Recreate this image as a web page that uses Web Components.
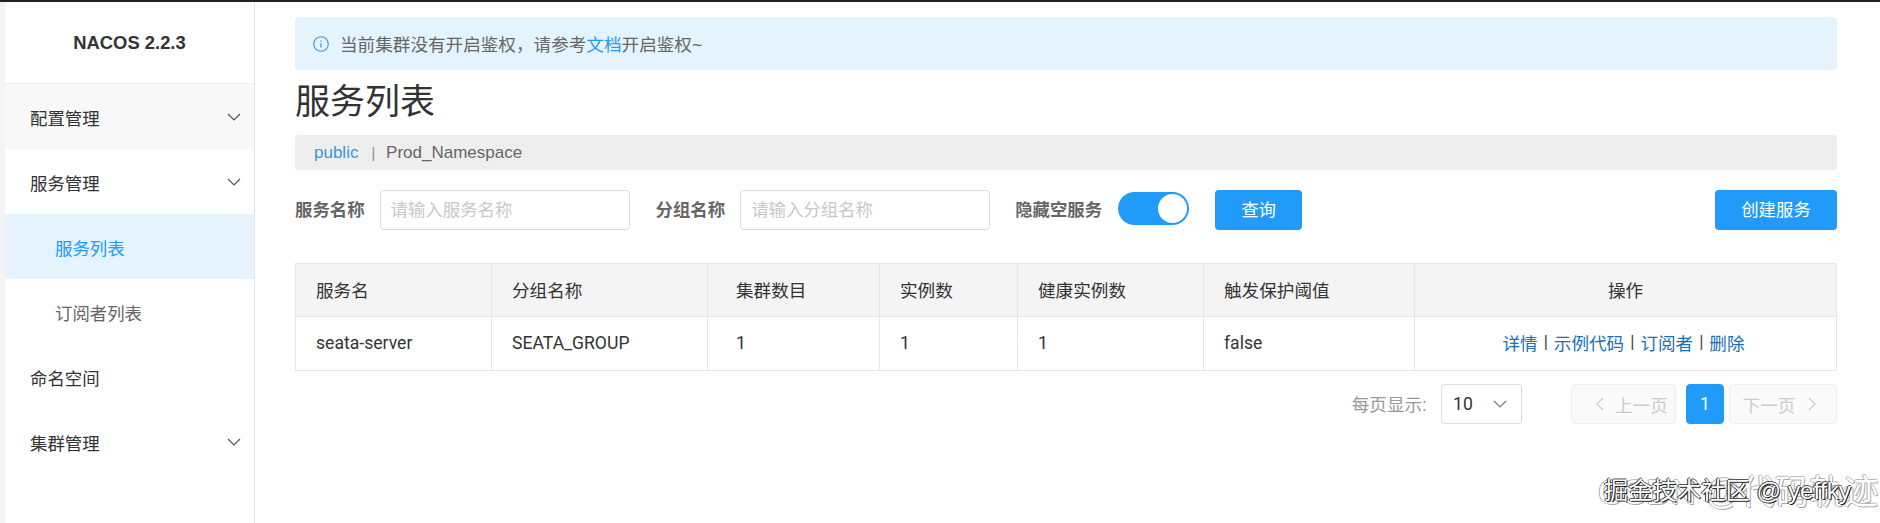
<!DOCTYPE html>
<html>
<head>
<meta charset="utf-8">
<title>Nacos</title>
<style>
  html, body { margin: 0; height: 100%; background: #fff; }
  body {
    font-family: "Liberation Sans", "Noto Sans CJK SC", sans-serif;
    color: #333;
    height: 523px;
    overflow: hidden;
  }
</style>
</head>
<body>
<nacos-app></nacos-app>

<script>
// small helper, every element below is just a template + shadow root
function defineEl(name, html, extra) {
  const tpl = document.createElement('template')
  tpl.innerHTML = html
  class El extends HTMLElement {
    constructor() {
      super()
      this.attachShadow({ mode: 'open' })
      this.shadowRoot.appendChild(tpl.content.cloneNode(true))
      if (extra) extra(this)
    }
  }
  customElements.define(name, El)
}

const chevron = `<svg width="14" height="8" viewBox="0 0 14 8" fill="none" stroke="currentColor" stroke-width="1.2"><path d="M1 1l6 6 6-6"/></svg>`

defineEl('nav-item', `
  <style>
    :host { display: flex; align-items: center; justify-content: space-between; height: 65px; padding: 0 13px 0 25px; font-size: 17.4px; color: #333; }
    :host([hover]) { background: #f8f8f8; }
    :host([sub]) { padding-left: 50px; color: #666; }
    :host([active]) { background: #e4f3fe; color: #209bfa; }
    span { position: relative; top: 1px; }
    .c { display: none; color: #555; line-height: 0; top: 0; }
    :host([arrow]) .c { display: block; }
  </style>
  <span><slot></slot></span>
  <span class="c">${chevron}</span>
`)

defineEl('app-sidebar', `
  <style>
    :host { display: block; width: 249px; flex: none; margin-left: 5px; border-right: 1px solid #e6e6e6; background: #fff; box-shadow: -5px 0 0 #f4f4f4; }
    .logo { height: 81px; display: flex; align-items: center; justify-content: center; font-size: 18.4px; font-weight: 700; color: #333; border-bottom: 1px solid #eee; }
  </style>
  <div class="logo">NACOS 2.2.3</div>
  <slot></slot>
`)

defineEl('alert-banner', `
  <style>
    :host { display: flex; align-items: center; height: 53px; padding: 0 0 0 18px; background: #e4f3fe; border-radius: 4px; color: #666; font-size: 17.6px; box-sizing: border-box; }
    svg { margin-right: 11px; flex: none; }
    ::slotted(a) { color: #209bfa; text-decoration: none; }
  </style>
  <svg width="16" height="16" viewBox="0 0 16 16" fill="none" stroke="#3f92ea" stroke-width="1.1">
    <circle cx="8" cy="8" r="7.3"/>
    <path d="M8 7.2v4.2" stroke-width="1.3"/>
    <path d="M8 4.4v1.3" stroke-width="1.3"/>
  </svg>
  <span><slot></slot></span>
`)

defineEl('page-title', `
  <style>
    :host { display: flex; align-items: center; height: 65px; font-size: 35px; color: #333; line-height: 1; padding-bottom: 2px; box-sizing: border-box; }
  </style>
  <slot></slot>
`)

defineEl('namespace-bar', `
  <style>
    :host { display: flex; align-items: center; height: 35px; padding-left: 19px; background: #eee; border-radius: 3px; font-size: 17px; color: #666; }
    .pub { color: #3b98dd; }
    .sep { margin: 0 11px 0 13px; color: #888; font-size: 14px; }
  </style>
  <span class="pub">public</span><span class="sep">|</span><span>Prod_Namespace</span>
`)

defineEl('text-field', `
  <style>
    :host { display: flex; align-items: center; }
    label { font-size: 17.4px; font-weight: 700; color: #666; margin-right: 15px; white-space: nowrap; padding-bottom: 3px; }
    .box { height: 40px; box-sizing: border-box; border: 1px solid #dcdcdc; border-radius: 4px; padding: 0 0 3px 10px; display: flex; align-items: center; font-size: 17.4px; color: #c8c8c8; }
  </style>
  <label><slot name="label"></slot></label>
  <div class="box"><slot></slot></div>
`, el => {
  el.shadowRoot.querySelector('.box').style.width = el.getAttribute('box-width') + 'px'
})

defineEl('toggle-switch', `
  <style>
    :host { display: flex; align-items: center; margin-left: -1px; }
    label { font-size: 17.4px; font-weight: 700; color: #666; margin-right: 16px; white-space: nowrap; padding-bottom: 3px; }
    .track { width: 71px; height: 33px; box-sizing: border-box; background: #209bfa; border-radius: 17px; display: flex; justify-content: flex-end; align-items: center; padding-right: 2px; margin-top: -4px; }
    .knob { width: 29px; height: 29px; background: #fff; border-radius: 50%; }
  </style>
  <label><slot></slot></label>
  <div class="track"><div class="knob"></div></div>
`)

defineEl('primary-button', `
  <style>
    :host { display: flex; align-items: center; justify-content: center; height: 40px; padding-bottom: 3px; background: #209bfa; color: #fff; border-radius: 4px; font-size: 17.4px; box-sizing: border-box; }
  </style>
  <slot></slot>
`)

defineEl('search-bar', `
  <style>
    :host { display: flex; align-items: center; height: 40px; margin-top: 20px; }
    .left { display: flex; align-items: center; gap: 26px; }
    .sp { flex: 1; }
    ::slotted(primary-button[slot="query"]) { width: 87px; margin-left: 26px; }
    ::slotted(primary-button[slot="create"]) { width: 122px; }
  </style>
  <div class="left"><slot></slot></div>
  <slot name="query"></slot>
  <div class="sp"></div>
  <slot name="create"></slot>
`)

defineEl('service-table', `
  <style>
    :host { display: block; margin-top: 33px; border: 1px solid #e6e6e6; font-size: 17.6px; color: #333; }
    .row { display: grid; grid-template-columns: 196px 216px 172px 138px 186px 211px 1fr; height: 53px; box-sizing: border-box; }
    .head { background: #f4f4f4; border-bottom: 1px solid #e6e6e6; }
    .row > div { display: flex; align-items: center; padding: 0 0 1px 20px; border-right: 1px solid #e6e6e6; font-family: "Roboto", "Noto Sans CJK SC", sans-serif; }
    .row > div:nth-child(3) { padding-left: 28px; }
    .row > div:last-child { border-right: 0; justify-content: center; padding-left: 0; }
    .ops { padding: 0 4px 3px 0 !important; }
    a { color: #1a6fb5; text-decoration: none; }
    i { font-style: normal; color: #444; margin: 0 6px; font-size: 16px; font-family: "Liberation Sans", sans-serif; }
  </style>
  <div class="row head">
    <div>服务名</div><div>分组名称</div><div>集群数目</div><div>实例数</div><div>健康实例数</div><div>触发保护阈值</div><div>操作</div>
  </div>
  <div class="row">
    <div>seata-server</div><div>SEATA_GROUP</div><div>1</div><div>1</div><div>1</div><div>false</div>
    <div class="ops"><a>详情</a><i>|</i><a>示例代码</a><i>|</i><a>订阅者</a><i>|</i><a>删除</a></div>
  </div>
`)

defineEl('page-nav', `
  <style>
    :host { display: flex; align-items: center; justify-content: flex-end; height: 40px; margin-top: 13px; font-size: 17.6px; color: #999; }
    .label { margin-right: 14px; padding-bottom: 2px; }
    .sel { width: 81px; height: 40px; box-sizing: border-box; border: 1px solid #dcdcdc; border-radius: 4px; display: flex; align-items: center; justify-content: space-between; padding: 0 14px 0 11px; color: #333; font-family: "Roboto", sans-serif; margin-right: 49px; }
    .sel svg { color: #777; }
    .btn { height: 40px; box-sizing: border-box; border: 1px solid #eee; border-radius: 4px; background: #fafafa; color: #ccc; display: flex; align-items: center; justify-content: center; gap: 11px; }
    .prev { width: 105px; margin-right: 10px; padding-left: 16px; }
    .next { width: 108px; margin-left: 5px; gap: 13px; padding-right: 6px; }
    .cur { width: 38px; background: #209bfa; border-color: #209bfa; color: #fff; font-family: "Roboto", sans-serif; }
  </style>
  <span class="label">每页显示:</span>
  <div class="sel"><span>10</span>${chevron}</div>
  <div class="btn prev">
    <svg width="9" height="14" viewBox="0 0 9 14" fill="none" stroke="currentColor" stroke-width="1.3"><path d="M8 1L2 7l6 6"/></svg>
    <span>上一页</span>
  </div>
  <div class="btn cur">1</div>
  <div class="btn next">
    <span>下一页</span>
    <svg width="9" height="14" viewBox="0 0 9 14" fill="none" stroke="currentColor" stroke-width="1.3"><path d="M1 1l6 6-6 6"/></svg>
  </div>
`)

defineEl('water-mark', `
  <style>
    :host { position: absolute; right: 0; bottom: 0; width: 290px; height: 63px; pointer-events: none; }
    .back { position: absolute; left: 8px; top: 15px; font-size: 34.5px; line-height: 1; white-space: nowrap; color: #fff; text-shadow: 1px 1px #a8a8a8, -1px 0 #a8a8a8, 0 -1px #bbb; }
    .front { position: absolute; left: 14px; top: 11px; font-size: 24.3px; white-space: nowrap; color: #fff; text-shadow: 1px 1px #222, -1px 0 #222, 0 -1px #555; }
  </style>
  <div class="back">CSDN @代码轨迹</div>
  <div class="front">掘金技术社区 @ yeffky</div>
`)

defineEl('nacos-app', `
  <style>
    :host { display: flex; height: 523px; border-top: 2px solid #222; box-sizing: border-box; position: relative; }
    main { width: 1542px; margin-left: 40px; padding-top: 15px; display: block; }
  </style>
  <app-sidebar>
    <nav-item arrow hover>配置管理</nav-item>
    <nav-item arrow>服务管理</nav-item>
    <nav-item sub active>服务列表</nav-item>
    <nav-item sub>订阅者列表</nav-item>
    <nav-item>命名空间</nav-item>
    <nav-item arrow>集群管理</nav-item>
  </app-sidebar>
  <main>
    <alert-banner>当前集群没有开启鉴权，请参考<a>文档</a>开启鉴权~</alert-banner>
    <page-title>服务列表</page-title>
    <namespace-bar></namespace-bar>
    <search-bar>
      <text-field box-width="250"><span slot="label">服务名称</span>请输入服务名称</text-field>
      <text-field box-width="250"><span slot="label">分组名称</span>请输入分组名称</text-field>
      <toggle-switch>隐藏空服务</toggle-switch>
      <primary-button slot="query">查询</primary-button>
      <primary-button slot="create">创建服务</primary-button>
    </search-bar>
    <service-table></service-table>
    <page-nav></page-nav>
  </main>
  <water-mark></water-mark>
`)
</script>
</body>
</html>
